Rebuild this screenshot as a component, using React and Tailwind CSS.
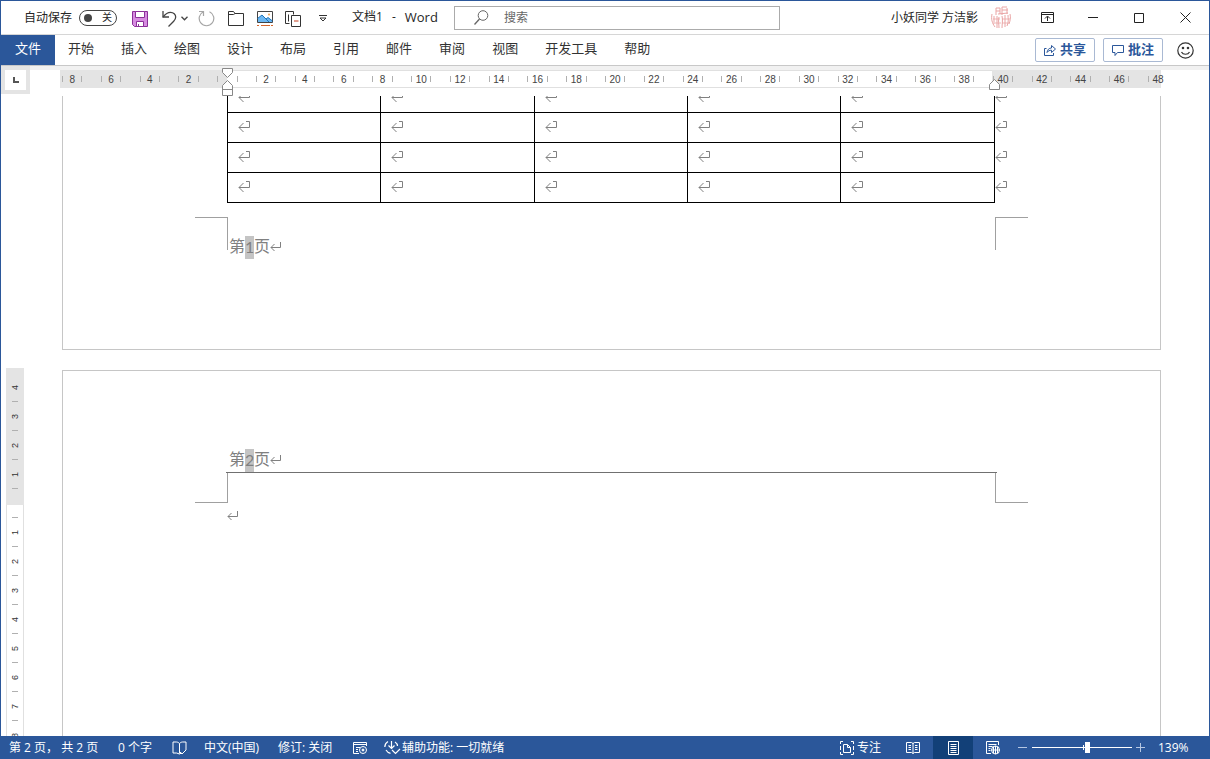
import { useState } from 'react';

const tabs = ['开始', '插入', '绘图', '设计', '布局', '引用', '邮件', '审阅', '视图', '开发工具', '帮助'];

// ruler runs from -8 to 48 characters, one cell per character
const rulerCells = Array.from({ length: 57 }, (_, i) => i - 8);

const columns = [1, 2, 3, 4, 5];
const rows = [1, 2, 3, 4];

function SaveIcon() {
  return (
    <svg width="16" height="16" viewBox="0 0 16 16" fill="none">
      <path d="M.5.5h15v15h-13l-2-2z" fill="#d68be0" stroke="#8a2f98" />
      <path d="M3.5.5h9v6h-9z" fill="#fff" stroke="#8a2f98" />
      <path d="M4.5 10.5h7v5h-7z" fill="#fff" stroke="#8a2f98" />
      <path d="M6.5 13v2.5" stroke="#8a2f98" />
    </svg>
  );
}

function UndoIcon() {
  return (
    <svg width="15" height="16" viewBox="0 0 15 16" fill="none" stroke="#444" strokeWidth="1.3">
      <path d="M1 0v6h6" />
      <path d="M1 6C3.5 2.8 6 1.3 8.5 1.3c3 0 5.2 2.200 5.200 4.700 0 1.800-.8 3-2 4.200L6.500 15.500" />
    </svg>
  );
}

function RedoIcon() {
  return (
    <svg width="17" height="17" viewBox="0 0 17 17" fill="none" stroke="#a6a6a6" strokeWidth="1.2">
      <path d="M1 1.500h4.500v4.500" />
      <path d="M5.500 1.800A7.300 7.300 0 1 0 11.500 1.800" />
    </svg>
  );
}

function FolderIcon() {
  return (
    <svg width="16" height="15" viewBox="0 0 16 15" fill="none" stroke="#333">
      <path d="M.5 14.500V.5h5l1.500 2h8.500v12z" />
      <path d="M.5 3.500h5l1.500-1" />
    </svg>
  );
}

function PictureIcon() {
  return (
    <svg width="16" height="16" viewBox="0 0 16 16" fill="none">
      <path d="M.5.5h15v11H.5z" fill="#fff" stroke="#444" />
      <path d="M1 7l4-3 4 4 2-1.500 4 3V11H1z" fill="#6db8f2" />
      <path d="M.5 7.500L5 4l7 7M9 8l2-1.500 4.500 3.500" stroke="#1e75bd" />
      <circle cx="12" cy="3.500" r="1" fill="#f0a050" />
      <path d="M0 14.500h2M4 14.500h9M14 14.500h2" stroke="#d5652b" />
    </svg>
  );
}

function CopyIcon() {
  return (
    <svg width="17" height="16" viewBox="0 0 17 16" fill="none" stroke="#333">
      <path d="M4.500 12.500h-4V.5h8v3" />
      <path d="M3.500 3.500v7" />
      <path d="M6.500 4.500h9v11h-9z" />
      <path d="M9 10h4.500" stroke="#c43e1c" />
    </svg>
  );
}

function Avatar() {
  return (
    <svg width="22" height="24" viewBox="0 0 22 24" fill="none" stroke="#eaa5a5">
      <path d="M6 2h4M6 2v7M10 2v6M6 5h4M12 1h5M12 4h6M12 1v8M17 2v6M8 8l10-1" />
      <path d="M2 8c-1 5 0 9 3 13M4 10v8M7 10v12M9 11c-1 4 0 7 0 11M12 10c1 4 0 8 0 12M15 9v12M18 9c0 4 1 6-1 11M20 8c1 4 0 7-1 10" />
      <path d="M3 13h7M5 17h6M12 13h8M12 17h7" strokeWidth=".8" />
    </svg>
  );
}

function CellMark() {
  return (
    <svg width="13" height="12" viewBox="0 0 13 12" fill="none" stroke="#808080">
      <path d="M8 1.500h3.500v6H1M5.500 3L1 7.500 5.500 12" />
    </svg>
  );
}

function ParagraphMark({ className }) {
  return (
    <svg width="12" height="10" viewBox="0 0 12 10" fill="none" stroke="#808080" className={className}>
      <path d="M10.500 0v5.500H1M4.500 2L1 5.500 4.500 9" />
    </svg>
  );
}

function ProofIcon() {
  return (
    <svg width="15" height="14" viewBox="0 0 15 14" fill="none" stroke="#fff">
      <path d="M7.500 2.500v10M7.500 2.500c-1-1-2-1.500-3-1.500H1v11h3.500l3 1 2-1M7.500 2.500c1-1 2-1.500 3-1.500H14v8l-4 4-2-2" />
    </svg>
  );
}

function MacroIcon() {
  return (
    <svg width="15" height="14" viewBox="0 0 15 14" fill="none" stroke="#fff">
      <path d="M6 12.500H.5V1.500h13V5M.5 3.500h13M3 6.500h4M3 8.500h2M3 10.500h2" />
      <circle cx="10" cy="9" r="3.500" />
      <circle cx="10" cy="9" r="1" fill="#fff" />
    </svg>
  );
}

function AccessibilityIcon() {
  return (
    <svg width="17" height="15" viewBox="0 0 17 15" fill="none" stroke="#fff" strokeWidth="1.2">
      <path d="M4 1.500C1.500 3 .8 5 .8 7M2 10c1 1.800 2.500 2.800 4.500 3.300M11 2c1.500 1 2.500 2.500 2.500 4" />
      <path d="M7.500 1v7M4.500 5.500l3 3 3-3" />
      <path d="M8 10l3.500 3.500L16 9" />
    </svg>
  );
}

function FocusIcon() {
  return (
    <svg width="14" height="14" viewBox="0 0 14 14" fill="none" stroke="#fff">
      <path d="M3 .5H.5V3M11 .5h2.500V3M3 13.500H.5V11M11 13.500h2.500V11M.5 5v4M13.500 5v4" />
      <path d="M3.500 3.500h4l3 3v5h-7zM7.500 3.500v3h3" />
    </svg>
  );
}

function ReadIcon() {
  return (
    <svg width="14" height="13" viewBox="0 0 14 13" fill="none" stroke="#fff">
      <path d="M7 2v10.500M.5 1.500h5L7 2.500l1.500-1h5v10h-5L7 12.500l-1.500-1h-5z" />
      <path d="M2.500 4.500H5M2.500 6.500H5M2.500 8.500H5M9 4.500h2.500M9 6.500h2.500M9 8.500h2.500" />
    </svg>
  );
}

function PrintIcon() {
  return (
    <svg width="11" height="14" viewBox="0 0 11 14" fill="none" stroke="#fff">
      <path d="M.5.5h10v13H.5zM2.500 3.500h6M2.500 5.500h6M2.500 7.500h6M2.500 9.500h6M2.500 11.500h6" />
    </svg>
  );
}

function WebIcon() {
  return (
    <svg width="15" height="14" viewBox="0 0 15 14" fill="none" stroke="#fff">
      <path d="M5 12.500H.5V.5h12V4M2.500 3.500h8M2.500 5.500h4M2.500 7.500h2M2.500 9.500h2" />
      <circle cx="9.500" cy="9" r="4" />
      <path d="M5.500 9h8M9.500 5v8M7.500 6v6M11.500 6v6" />
    </svg>
  );
}

function TitleBar() {
  const [autoSave, setAutoSave] = useState(false);

  return (
    <header className="flex h-[34px] shrink-0 items-center border-b border-[#d6d6d6] pl-[23px] text-xs text-[#262626]">
      <label htmlFor="autosave">自动保存</label>
      <button
        id="autosave"
        role="switch"
        aria-checked={autoSave}
        onClick={() => setAutoSave(!autoSave)}
        className="ml-[7px] flex h-4 w-[38px] items-center justify-between rounded-full border border-[#444] px-[4px] text-[10px]"
      >
        <span className="size-2 rounded-full bg-[#444]" />
        {autoSave ? '开' : '关'}
      </button>

      <div className="ml-2 flex items-center pt-[2px]">
        <button aria-label="保存" className="flex w-[29px] justify-center"><SaveIcon /></button>
        <button aria-label="撤消" className="flex w-[38px] items-center gap-1 pl-2">
          <UndoIcon />
          <svg width="7" height="5" viewBox="0 0 7 5" fill="none" stroke="#444" strokeWidth="1.3">
            <path d="M.5.8l3 3 3-3" />
          </svg>
        </button>
        <button aria-label="重复" className="flex w-[29px] justify-center"><RedoIcon /></button>
        <button aria-label="打开" className="flex w-[29px] justify-center"><FolderIcon /></button>
        <button aria-label="图片" className="flex w-[29px] justify-center"><PictureIcon /></button>
        <button aria-label="比较" className="flex w-[29px] justify-center"><CopyIcon /></button>
        <button aria-label="自定义" className="flex w-[29px] justify-center">
          <svg width="8" height="7" viewBox="0 0 8 7" fill="none" stroke="#333">
            <path d="M0 .5h8M1 3l3 3 3-3z" />
          </svg>
        </button>
      </div>

      <h1 className="ml-[15px] flex w-[102px] shrink-0 items-center gap-[9px]">
        <span>文档1</span>
        <span>-</span>
        <span className="text-[13px]">Word</span>
      </h1>

      <div className="flex h-6 w-[326px] items-center border border-[#ababab] pl-[19px]">
        <svg width="15" height="15" viewBox="0 0 15 15" fill="none" stroke="#666">
          <circle cx="9" cy="5.500" r="4.800" />
          <path d="M5.500 9L.5 14.500" strokeWidth="1.3" />
        </svg>
        <input
          aria-label="搜索"
          placeholder="搜索"
          className="ml-[15px] min-w-0 flex-1 outline-none placeholder:text-[#666]"
        />
      </div>

      <div className="ml-auto flex h-full items-center pr-px">
        <span>小妖同学 方洁影</span>
        <span className="mx-3"><Avatar /></span>
        <button aria-label="功能区显示选项" className="flex h-full w-[46px] items-center justify-center">
          <svg width="13" height="11" viewBox="0 0 13 11" fill="none" stroke="#222">
            <path d="M.5.5h12v10H.5zM.5 2.500h12M6.500 9V4.500M4 6.500L6.500 4 9 6.500" />
          </svg>
        </button>
        <button aria-label="最小化" className="flex h-full w-[46px] items-center justify-center">
          <svg width="10" height="11" viewBox="0 0 10 11" stroke="#222"><path d="M0 5.500h10" /></svg>
        </button>
        <button aria-label="最大化" className="flex h-full w-[46px] items-center justify-center">
          <svg width="10" height="10" viewBox="0 0 10 10" fill="none" stroke="#222"><path d="M.5.5h9v9h-9z" /></svg>
        </button>
        <button aria-label="关闭" className="flex h-full w-[46px] items-center justify-center">
          <svg width="11" height="11" viewBox="0 0 11 11" stroke="#222"><path d="M.5.5l10 10M10.500.5l-10 10" /></svg>
        </button>
      </div>
    </header>
  );
}

function RibbonTabs() {
  return (
    <nav className="flex h-[30px] shrink-0 items-center text-[13px] text-[#333]">
      <button className="h-full w-[54px] bg-[#2b579a] pb-[2px] text-white">文件</button>
      <div className="ml-px flex gap-[3px] pb-[2px]">
        {tabs.map((tab) => (
          <button key={tab} className="px-3">{tab}</button>
        ))}
      </div>
      <div className="ml-auto flex items-center gap-2 pr-[15px] font-bold text-[#2b579a]">
        <button className="flex h-6 w-[60px] items-center justify-center gap-1 rounded-xs border border-[#a9b9d3]">
          <svg width="12" height="12" viewBox="0 0 12 12" fill="none" stroke="#2b579a">
            <path d="M2.500 4.500h-2v7h9V9" />
            <path d="M3 8.500c.5-3 2-4.500 4.500-4.500V1.500L11.500 5 7.500 8.500V6.200C5.500 6.200 4 7 3 8.500z" />
          </svg>
          共享
        </button>
        <button className="flex h-6 w-[60px] items-center justify-center gap-1 rounded-xs border border-[#a9b9d3]">
          <svg width="12" height="11" viewBox="0 0 12 11" fill="none" stroke="#2b579a">
            <path d="M.5.5h11v7h-6l-2.500 3v-3H.5z" />
          </svg>
          批注
        </button>
        <button aria-label="反馈" className="ml-[6px]">
          <svg width="17" height="17" viewBox="0 0 17 17" fill="none" stroke="#333" strokeWidth="1.2">
            <circle cx="8.500" cy="8.500" r="7.700" />
            <path d="M4.500 10c1.500 3 6.500 3 8 0" />
            <circle cx="6" cy="6" r=".7" fill="#333" />
            <circle cx="11" cy="6" r=".7" fill="#333" />
          </svg>
        </button>
      </div>
    </nav>
  );
}

function HorizontalRuler() {
  return (
    <div className="flex h-[31px] shrink-0 border-t border-[#c8c8c8]">
      <button
        aria-label="制表符"
        className="flex h-[28px] w-[29px] shrink-0 items-center justify-center border-4 border-[#e4e4e4] bg-white"
      >
        <svg width="6" height="6" viewBox="0 0 6 6" fill="none" stroke="#555" strokeWidth="2">
          <path d="M1 0v5h5" />
        </svg>
      </button>
      <div className="flex-1">
        <div className="h-1 bg-[#f1f1f1]" />
        <div className="relative ml-[30px] mr-[48px] grid h-[18px]">
          <div className="col-start-1 row-start-1 flex">
            <div className="w-[167px] bg-[#e4e4e4]" />
            <div className="flex-1 border-y border-[#e0e0e0]" />
            <div className="w-[169px] bg-[#e4e4e4]" />
          </div>
          <div className="col-start-1 row-start-1 -mr-[6px] ml-[2px] flex items-center font-['Liberation_Sans',sans-serif] text-[10px] text-[#444]">
            {rulerCells.map((n) => (
              <div key={n} className="flex h-[6px] min-w-0 flex-1 items-center justify-center border-l border-[#b0b0b0]">
                {n % 2 === 0 && n !== 0 ? Math.abs(n) : ''}
              </div>
            ))}
          </div>
          {/* indent handles sit on top of the scale */}
          <svg className="absolute -top-[2px] left-[162px]" width="12" height="29" viewBox="0 0 12 29" fill="#fff" stroke="#888">
            <path d="M.5.5h10v4l-5 5-5-5zM.5 27.500v-10l5-5 5 5v10zM.5 21.500h10" />
          </svg>
          <svg className="absolute right-[160px] top-[9px]" width="12" height="12" viewBox="0 0 12 12" fill="#fff" stroke="#888">
            <path d="M.5 10.500v-5l5-5 5 5v5z" />
          </svg>
        </div>
      </div>
    </div>
  );
}

function VerticalCell({ n }) {
  return (
    <div className="flex h-[29px] flex-col items-center">
      <span className="flex flex-1 rotate-180 items-center justify-center leading-3 [writing-mode:vertical-rl]">{n}</span>
      <span className="h-px w-[6px] shrink-0 bg-[#b0b0b0]" />
    </div>
  );
}

function VerticalRuler() {
  return (
    <div className="ml-[5px] mt-[272px] w-[18px] shrink-0 font-['Liberation_Sans',sans-serif] text-[9px] text-[#333]">
      <div className="h-[137px] bg-[#e4e4e4] pt-[5px]">
        {[4, 3, 2, 1].map((n) => <VerticalCell key={n} n={n} />)}
      </div>
      <div className="border-x border-[#e0e0e0] pt-3">
        <div className="mx-auto h-px w-[6px] bg-[#b0b0b0]" />
        {[1, 2, 3, 4, 5, 6, 7, 8].map((n) => <VerticalCell key={n} n={n} />)}
      </div>
    </div>
  );
}

function PageNumber({ n }) {
  return (
    <p className="flex h-[23px] pl-[2px] text-base leading-[21px] text-[#808080]">
      第<span className="w-[9px] bg-[#c4c4c4] text-center font-['Lato','Open_Sans',sans-serif]">{n}</span>页
      <ParagraphMark className="mt-[6px]" />
    </p>
  );
}

function Document() {
  return (
    <main className="flex min-h-0 flex-1 overflow-hidden">
      <VerticalRuler />
      <div className="ml-[38px] mr-[48px] flex min-w-0 flex-1 flex-col gap-5">
        <section className="h-[254px] shrink-0 border border-t-0 border-[#c6c6c6] px-[164px]">
          <div className="-mr-[13px] -mt-[14px]">
            <table className="w-full table-fixed border-collapse">
              <colgroup>
                {columns.map((c) => <col key={c} />)}
                <col className="w-[15px]" />
              </colgroup>
              <tbody>
                {rows.map((r) => (
                  <tr key={r} className="h-[30px]">
                    {columns.map((c) => (
                      <td key={c} className="border border-black pb-1 pl-[10px]"><CellMark /></td>
                    ))}
                    <td className="pb-1"><CellMark /></td>
                  </tr>
                ))}
              </tbody>
            </table>
          </div>
          <div className="-mx-8 mt-[14px] flex justify-between">
            <div className="size-[33px] border-r border-t border-[#a0a0a0]" />
            <div className="size-[33px] border-l border-t border-[#a0a0a0]" />
          </div>
          <div className="-mt-[14px]">
            <PageNumber n={1} />
          </div>
        </section>

        <section className="flex-1 border border-b-0 border-[#c6c6c6] px-[164px] pt-[78px]">
          <PageNumber n={2} />
          <div className="-mx-px h-px bg-[#707070]" />
          <div className="-mx-8 flex justify-between">
            <div className="h-[30px] w-[33px] border-b border-r border-[#a0a0a0]" />
            <div className="h-[30px] w-[33px] border-b border-l border-[#a0a0a0]" />
          </div>
          <ParagraphMark className="mt-2" />
        </section>
      </div>
    </main>
  );
}

function StatusBar() {
  const [zoom, setZoom] = useState(56);

  return (
    <footer className="flex h-[23px] shrink-0 items-center whitespace-nowrap bg-[#2b579a] px-2 text-xs text-white">
      <span className="w-[109px]">第 2 页， 共 2 页</span>
      <span className="w-[54px]">0 个字</span>
      <button aria-label="校对" className="mr-[17px]"><ProofIcon /></button>
      <span className="w-[74px]">中文(中国)</span>
      <span className="w-[75px]">修订: 关闭</span>
      <button aria-label="宏" className="mr-4"><MacroIcon /></button>
      <button className="flex items-center gap-px"><AccessibilityIcon />辅助功能: 一切就绪</button>

      <div className="ml-auto flex h-full items-center">
        <button className="mr-3 flex items-center gap-[3px]"><FocusIcon />专注</button>
        <button aria-label="阅读视图" className="flex h-full w-10 items-center justify-center"><ReadIcon /></button>
        <button aria-label="页面视图" className="flex h-full w-10 items-center justify-center bg-[#124078]"><PrintIcon /></button>
        <button aria-label="Web 版式视图" className="flex h-full w-10 items-center justify-center"><WebIcon /></button>
        <button aria-label="缩小" className="ml-[5px] flex w-[14px]">
          <svg width="9" height="9" viewBox="0 0 9 9" stroke="#b5c7e3"><path d="M0 4.500h9" /></svg>
        </button>
        <div className="relative flex h-full w-[100px] items-center">
          <span className="absolute left-[51px] h-[5px] w-px bg-white" />
          <input
            type="range"
            aria-label="缩放"
            value={zoom}
            onChange={(e) => setZoom(Number(e.target.value))}
            className="relative h-px w-full appearance-none bg-white [&::-webkit-slider-thumb]:h-[11px] [&::-webkit-slider-thumb]:w-[5px] [&::-webkit-slider-thumb]:appearance-none [&::-webkit-slider-thumb]:bg-white"
          />
        </div>
        <button aria-label="放大" className="ml-1">
          <svg width="9" height="9" viewBox="0 0 9 9" stroke="#b5c7e3"><path d="M0 4.500h9M4.500 0v9" /></svg>
        </button>
        <span className="ml-[13px] w-[43px]">139%</span>
      </div>
    </footer>
  );
}

function App() {
  return (
    <div className="flex h-screen flex-col overflow-hidden border-x border-t border-[#2b579a] bg-white font-['Open_Sans','Noto_Sans_CJK_SC',sans-serif]">
      <TitleBar />
      <RibbonTabs />
      <HorizontalRuler />
      <Document />
      <StatusBar />
    </div>
  );
}

export default App;
